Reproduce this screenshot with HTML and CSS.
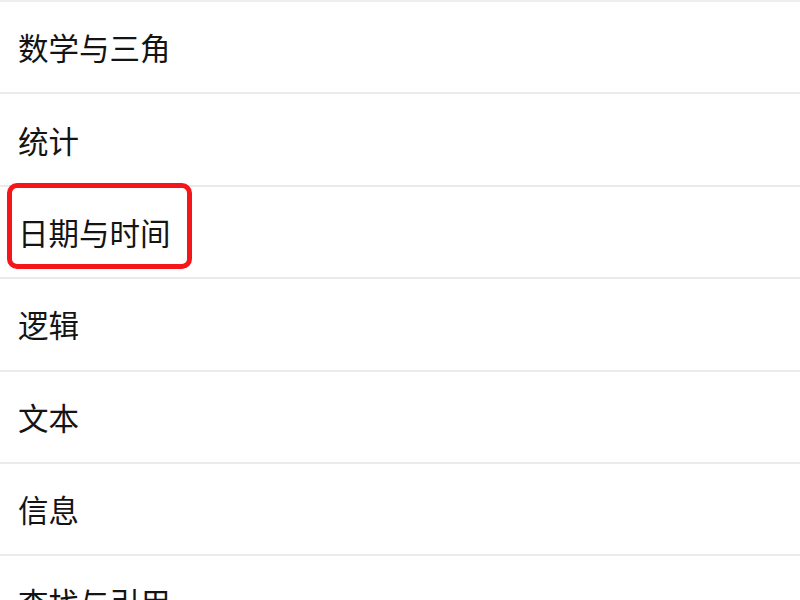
FILE: index.html
```html
<!DOCTYPE html>
<html lang="zh-CN">
<head>
  <meta charset="UTF-8">
  <title>函数类别</title>
  <meta name="viewport" content="width=device-width, initial-scale=1.0">
  <link rel="stylesheet" href="styles.css">
</head>
<body>
  <ul class="cat-list">
    <li class="cat-item">数学与三角</li>
    <li class="cat-item">统计</li>
    <li class="cat-item marked">日期与时间<span class="mark-box"></span></li>
    <li class="cat-item">逻辑</li>
    <li class="cat-item">文本</li>
    <li class="cat-item">信息</li>
    <li class="cat-item">查找与引用</li>
  </ul>
</body>
</html>
```

FILE: styles.css
```css
body {
  margin: 0;
  background: #fff;
  font-family: "Noto Sans CJK SC", "Noto Sans", sans-serif;
  overflow: hidden;
}
.cat-list {
  list-style: none;
  margin: 0;
  padding: 0;
  border-top: 2px solid #eeeeee;
}
.cat-item {
  position: relative;
  display: flex;
  align-items: center;
  height: 90.4px;
  padding-left: 18px;
  border-bottom: 2px solid #ebebeb;
  font-size: 30.5px;
  color: #141414;
}
.mark-box {
  position: absolute;
  left: 7px;
  top: -4px;
  width: 185px;
  height: 86px;
  box-sizing: border-box;
  border: 5px solid #f5161a;
  border-radius: 10px;
}
```
